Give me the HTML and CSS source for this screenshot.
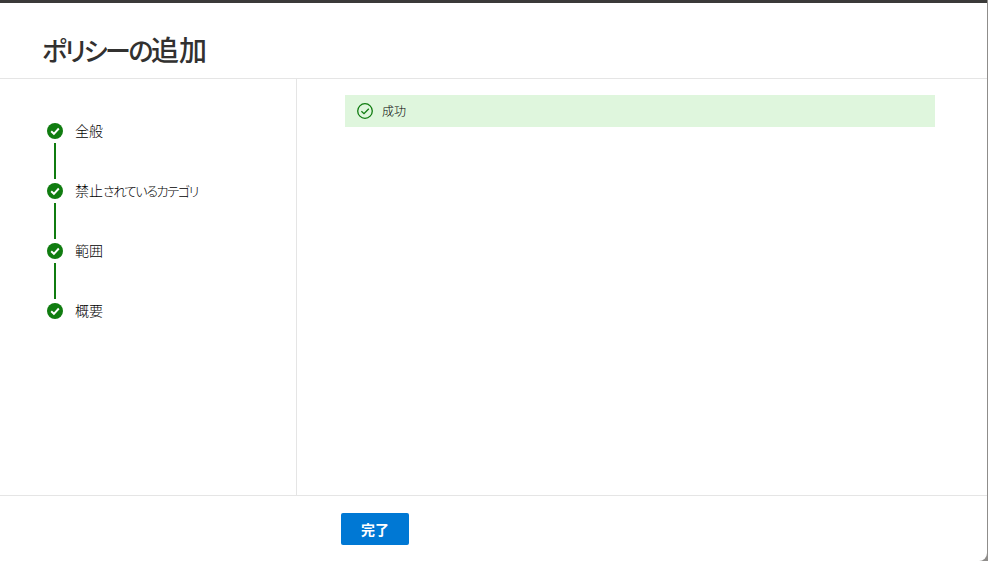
FILE: index.html
```html
<!DOCTYPE html>
<html lang="ja">
<head>
<meta charset="utf-8">
<title>ポリシーの追加</title>
<link rel="stylesheet" href="styles.css">
</head>
<body>
<div class="panel">
  <header class="header"><h1 class="title"><span class="title-kana">ポリシーの</span>追加</h1></header>
  <div class="main">
    <nav class="steps">
      <div class="step">
        <div class="rail">
          <svg class="check" viewBox="0 0 16 16"><circle cx="8" cy="8" r="8" fill="#107c10"/><path d="M4.2 8.2l2.7 2.6 4.9-5.3" fill="none" stroke="#fff" stroke-width="1.9"/></svg>
          <span class="line"></span>
        </div>
        <span class="label">全般</span>
      </div>
      <div class="step">
        <div class="rail">
          <svg class="check" viewBox="0 0 16 16"><circle cx="8" cy="8" r="8" fill="#107c10"/><path d="M4.2 8.2l2.7 2.6 4.9-5.3" fill="none" stroke="#fff" stroke-width="1.9"/></svg>
          <span class="line"></span>
        </div>
        <span class="label">禁止<span class="label-kana">されているカテゴリ</span></span>
      </div>
      <div class="step">
        <div class="rail">
          <svg class="check" viewBox="0 0 16 16"><circle cx="8" cy="8" r="8" fill="#107c10"/><path d="M4.2 8.2l2.7 2.6 4.9-5.3" fill="none" stroke="#fff" stroke-width="1.9"/></svg>
          <span class="line"></span>
        </div>
        <span class="label">範囲</span>
      </div>
      <div class="step">
        <div class="rail">
          <svg class="check" viewBox="0 0 16 16"><circle cx="8" cy="8" r="8" fill="#107c10"/><path d="M4.2 8.2l2.7 2.6 4.9-5.3" fill="none" stroke="#fff" stroke-width="1.9"/></svg>
        </div>
        <span class="label">概要</span>
      </div>
    </nav>
    <section class="content">
      <div class="banner">
        <svg class="banner-icon" viewBox="0 0 16 16"><circle cx="8" cy="8" r="7.3" fill="none" stroke="#107c10" stroke-width="1.3"/><path d="M4.4 8.2l2.6 2.5 4.8-5" fill="none" stroke="#107c10" stroke-width="1.3"/></svg>
        <span class="banner-text">成功</span>
      </div>
    </section>
  </div>
  <footer class="footer"><button class="done" type="button">完了</button></footer>
</div>
</body>
</html>
```

FILE: styles.css
```css
* { box-sizing: border-box; }
html, body { margin: 0; height: 100%; }
body {
  width: 988px;
  height: 561px;
  overflow: hidden;
  background: #8f8d8b;
  font-family: "Noto Sans CJK JP", "Liberation Sans", sans-serif;
  color: #323130;
}
.panel {
  width: 987px;
  height: 561px;
  background: #fff;
  border-top: 3px solid #3b3a39;
  border-bottom-right-radius: 8px;
  display: flex;
  flex-direction: column;
}
.header {
  height: 76px;
  flex: none;
  padding: 28px 0 0 42px;
  border-bottom: 1px solid #e5e5e5;
}
.title {
  margin: 0;
  font-size: 28px;
  line-height: 36px;
  font-weight: 500;
  font-feature-settings: "palt";
  color: #323130;
}
.title-kana { font-size: 26px; letter-spacing: -2.4px; }
.main { flex: 1; display: flex; min-height: 0; }
.steps {
  width: 297px;
  flex: none;
  padding: 44px 0 0 47px;
  border-right: 1px solid #e5e5e5;
}
.step { display: flex; height: 60px; }
.rail {
  width: 16px;
  display: flex;
  flex-direction: column;
  align-items: center;
  margin-right: 12px;
}
.check { width: 16px; height: 16px; flex: none; }
.line { width: 2px; height: 36px; margin-top: 4px; background: #107c10; }
.label {
  font-size: 14px;
  line-height: 14px;
  font-weight: 300;
  font-feature-settings: "palt";
  color: #000;
}
.label-kana { font-size: 13px; letter-spacing: -1.3px; }
.content { flex: 1; padding: 16px 0 0 48px; }
.banner {
  width: 590px;
  height: 32px;
  background: #dff6dd;
  display: flex;
  align-items: center;
  padding-left: 12px;
}
.banner-icon { width: 16px; height: 16px; margin-right: 8px; }
.banner-text { font-size: 12px; line-height: 16px; margin-left: 1px; font-weight: 300; color: #000; }
.footer {
  height: 66px;
  flex: none;
  border-top: 1px solid #e5e5e5;
  padding: 17px 0 0 341px;
}
.done {
  display: block;
  width: 68px;
  height: 32px;
  padding: 0;
  border: none;
  border-radius: 2px;
  background: #0078d4;
  color: #fff;
  font-family: inherit;
  font-size: 14px;
  font-weight: 600;
}
```
